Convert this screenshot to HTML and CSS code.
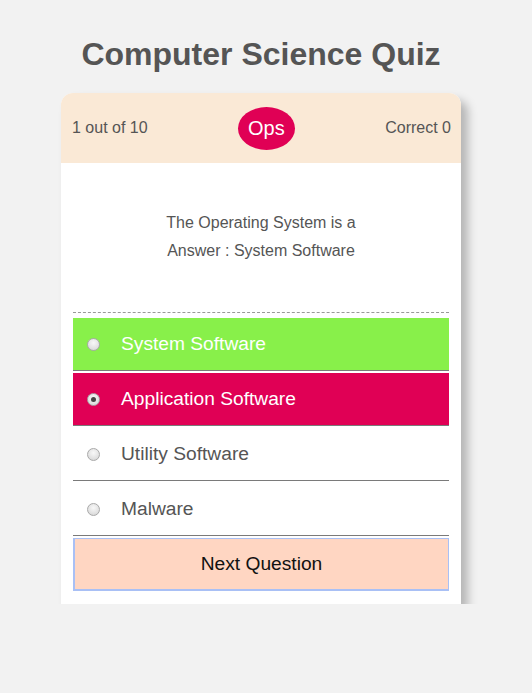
FILE: index.html
```html
<!DOCTYPE html>
<html lang="en">
<head>
<meta charset="utf-8">
<title>Computer Science Quiz</title>
<link rel="stylesheet" href="styles.css">
</head>
<body>
<div class="page">
  <h1 class="title">Computer Science Quiz</h1>
  <div class="card">
    <div class="header">
      <span class="count">1 out of 10</span>
      <span class="badge">Ops</span>
      <span class="score">Correct 0</span>
    </div>
    <div class="body">
      <div class="question">
        <div>The Operating System is a</div>
        <div>Answer : System Software</div>
      </div>
      <div class="options">
        <label class="option correct"><span class="radio"></span><span class="label">System Software</span></label>
        <label class="option wrong"><span class="radio checked"></span><span class="label">Application Software</span></label>
        <label class="option"><span class="radio"></span><span class="label">Utility Software</span></label>
        <label class="option"><span class="radio"></span><span class="label">Malware</span></label>
      </div>
      <button class="next">Next Question</button>
    </div>
  </div>
</div>
</body>
</html>
```
FILE: styles.css
```css
* { box-sizing: border-box; }
html, body {
  margin: 0;
  padding: 0;
  background: #f2f2f2;
}
body {
  font-family: "Liberation Sans", Arial, sans-serif;
  color: #555;
  padding-right: 10px;
}
.page {
  display: flex;
  flex-direction: column;
  align-items: center;
}
.title {
  margin: 36px 0 20px;
  font-size: 32px;
  line-height: 37px;
  font-weight: bold;
  color: #555;
}
.card {
  width: 400px;
  background: #fff;
  border-radius: 12px 12px 0 0;
  box-shadow: 7px 7px 10px rgba(0, 0, 0, 0.25);
}
.header {
  height: 70px;
  background: #fae9d6;
  border-radius: 12px 12px 0 0;
  display: flex;
  align-items: center;
  justify-content: space-between;
  padding: 0 10px 0 11px;
  font-size: 16px;
}
.badge {
  width: 57px;
  height: 43px;
  border-radius: 50%;
  background: #e00055;
  color: #fff;
  font-size: 20px;
  display: flex;
  align-items: center;
  justify-content: center;
}
.body {
  padding: 0 12px 13px;
}
.question {
  padding: 46px 0 47px;
  text-align: center;
  font-size: 16px;
  line-height: 28px;
  border-bottom: 1px dashed #999;
}
.options {
  margin-top: 5px;
  display: flex;
  flex-direction: column;
  gap: 2px;
}
.option {
  display: flex;
  align-items: center;
  height: 53px;
  padding-left: 14px;
  border-bottom: 1px solid #7a7a7a;
  font-size: 19.2px;
  color: #555;
}
.option.correct {
  background: #88f04a;
  color: #fff;
}
.option.wrong {
  background: #e00055;
  color: #fff;
}
.radio {
  width: 13px;
  height: 13px;
  border-radius: 50%;
  border: 1px solid #a9a9a9;
  background: radial-gradient(circle at 50% 35%, #f8f8f8 0%, #e2e2e2 60%, #cfcfcf 100%);
  margin-right: 21px;
  flex: none;
  display: flex;
  align-items: center;
  justify-content: center;
}
.radio.checked::after {
  content: "";
  width: 5px;
  height: 5px;
  border-radius: 50%;
  background: #444;
}
.next {
  display: block;
  width: 100%;
  height: 53px;
  margin-top: 2px;
  background: #ffd6c2;
  border: 1px solid #a9c0f5;
  border-left-width: 2px;
  border-bottom-width: 2px;
  font-family: "Liberation Sans", Arial, sans-serif;
  font-size: 19.2px;
  color: #111;
}
```
